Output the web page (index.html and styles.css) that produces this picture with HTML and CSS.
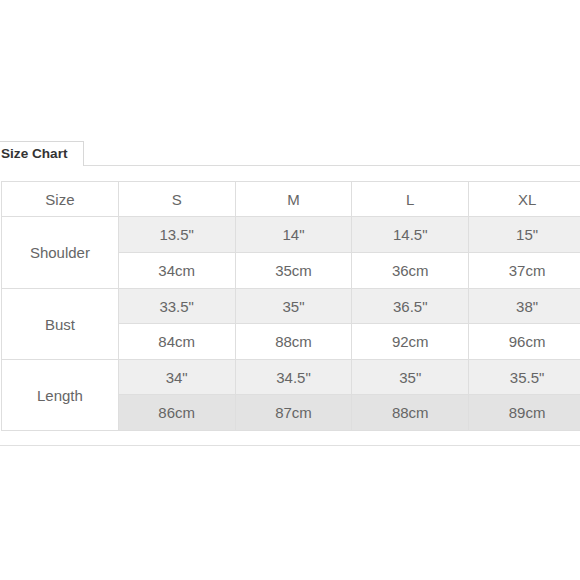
FILE: index.html
```html
<!DOCTYPE html>
<html>
<head>
<meta charset="utf-8">
<link rel="stylesheet" href="styles.css">
</head>
<body>
<div class="page">
  <div class="tabs"><span class="tab">Size Chart</span></div>
  <table class="chart">
    <tr class="h35 head"><td class="label">Size</td><td>S</td><td>M</td><td>L</td><td>XL</td></tr>
    <tr class="h36 inch"><td class="label" rowspan="2">Shoulder</td><td>13.5"</td><td>14"</td><td>14.5"</td><td>15"</td></tr>
    <tr class="h36 cm"><td>34cm</td><td>35cm</td><td>36cm</td><td>37cm</td></tr>
    <tr class="h35 inch"><td class="label" rowspan="2">Bust</td><td>33.5"</td><td>35"</td><td>36.5"</td><td>38"</td></tr>
    <tr class="h36 cm"><td>84cm</td><td>88cm</td><td>92cm</td><td>96cm</td></tr>
    <tr class="h35 inch"><td class="label" rowspan="2">Length</td><td>34"</td><td>34.5"</td><td>35"</td><td>35.5"</td></tr>
    <tr class="h36 cm dark"><td>86cm</td><td>87cm</td><td>88cm</td><td>89cm</td></tr>
  </table>
  <div class="rule"></div>
</div>
</body>
</html>
```
FILE: styles.css
```css
html, body {
  margin: 0;
  padding: 0;
  background: #fff;
  overflow: hidden;
}
.page {
  width: 580px;
  height: 580px;
  overflow: hidden;
  padding-top: 141px;
  box-sizing: border-box;
  font-family: "Liberation Sans", Arial, sans-serif;
}
.tabs {
  border-bottom: 1px solid #dcdcdc;
  height: 24px;
}
.tab {
  display: inline-block;
  box-sizing: border-box;
  width: 84px;
  height: 25px;
  border-top: 1px solid #d8d8d8;
  border-right: 1px solid #d8d8d8;
  background: #fff;
  padding: 4px 0 0 1px;
  font-size: 13.6px;
  font-weight: bold;
  color: #333;
  line-height: 16px;
}
.chart {
  margin: 15px 0 0 1px;
  border-collapse: collapse;
  table-layout: fixed;
  width: 585px;
}
.chart td {
  border: 1px solid #dedede;
  text-align: center;
  vertical-align: middle;
  font-size: 15px;
  color: #666;
  padding: 0;
  line-height: 17px;
}
.h35 td { height: 34px; }
.h36 td { height: 35px; }
.inch td { background: #efefef; }
.cm td { background: #fff; }
.dark td { background: #e3e3e3; }
.chart td.label {
  background: #fff;
}
.rule {
  margin-top: 14px;
  border-top: 1px solid #e0e0e0;
}
```
